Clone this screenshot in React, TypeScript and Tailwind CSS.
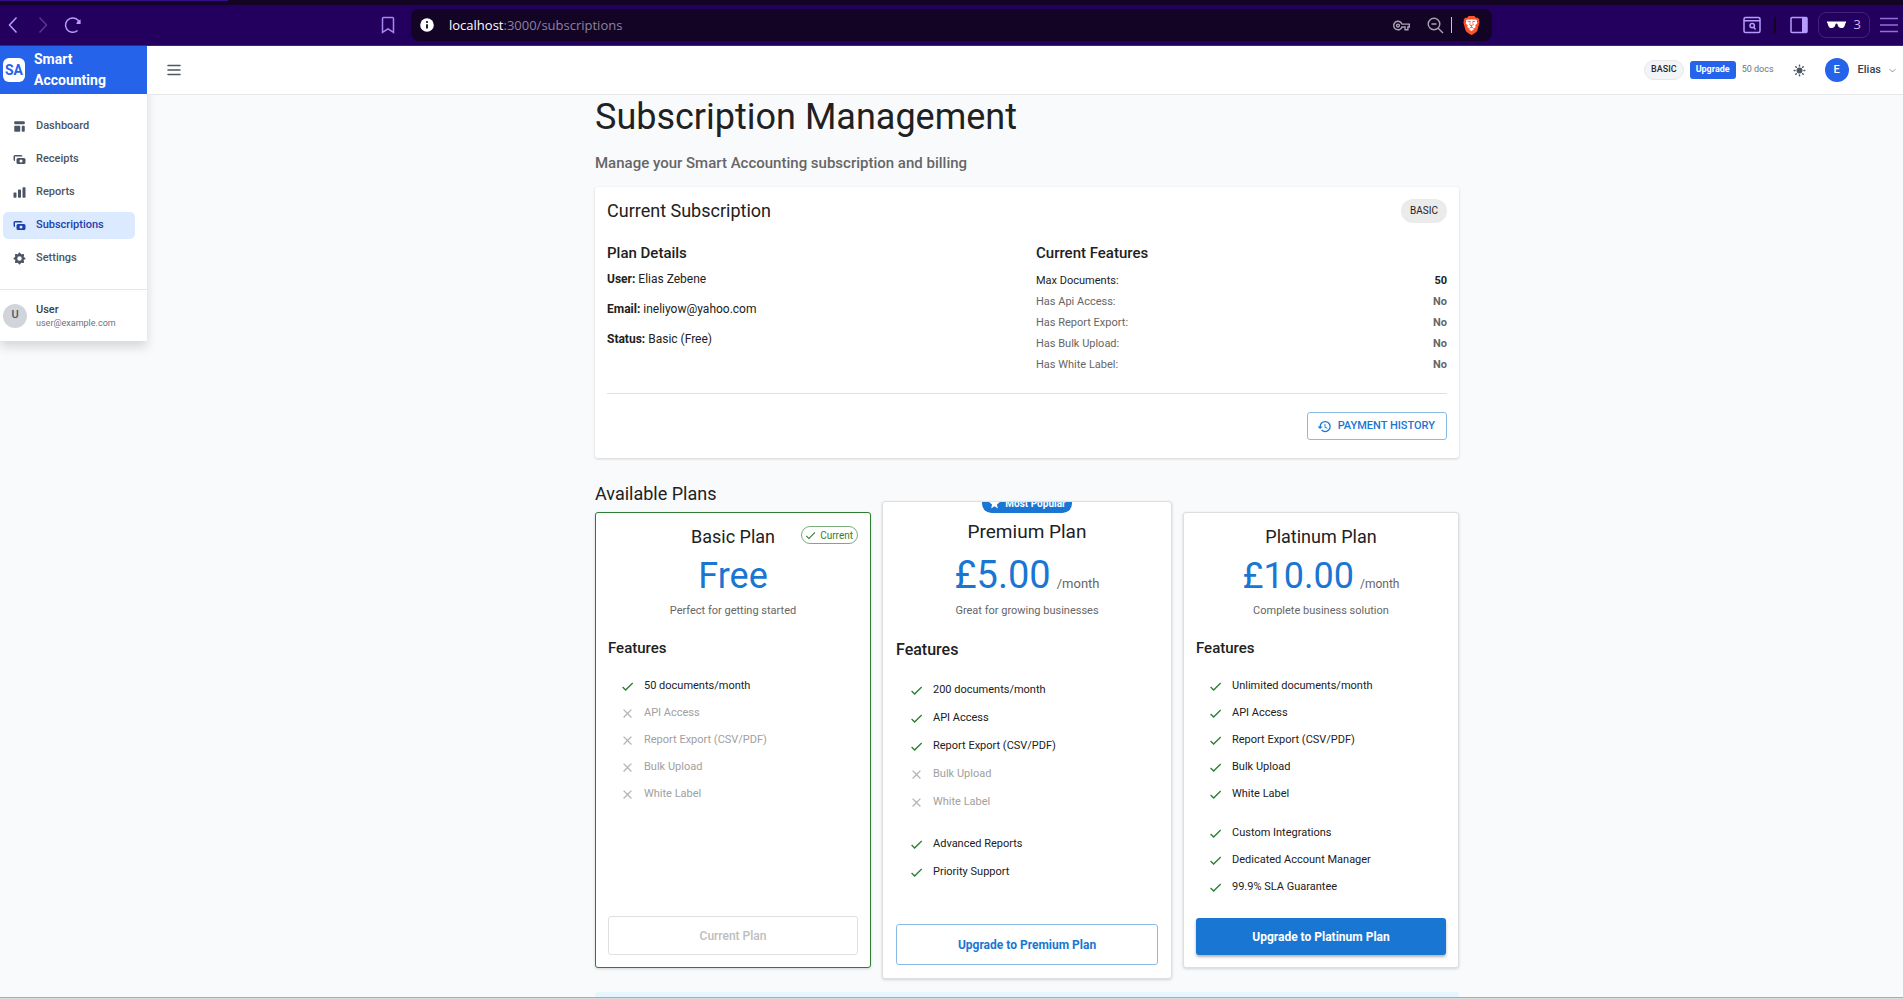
import type { ComponentType, ReactNode } from "react";
import { HiCash, HiChartBar, HiCog, HiOutlineChevronDown, HiOutlineMenu, HiSun, HiTemplate } from "react-icons/hi";
import { MdCheck, MdClose, MdHistory, MdOutlineVpnKey, MdStar } from "react-icons/md";
import { SiBrave } from "react-icons/si";

type Feature = { label: string; included: boolean };

type Plan = {
  name: string;
  price: string;
  period?: string;
  description: string;
  features: Feature[];
  extras: string[];
  action: string;
  kind: "current" | "popular" | "standard";
};

const plans: Plan[] = [
  {
    name: "Basic Plan",
    price: "Free",
    description: "Perfect for getting started",
    features: [
      { label: "50 documents/month", included: true },
      { label: "API Access", included: false },
      { label: "Report Export (CSV/PDF)", included: false },
      { label: "Bulk Upload", included: false },
      { label: "White Label", included: false },
    ],
    extras: [],
    action: "Current Plan",
    kind: "current",
  },
  {
    name: "Premium Plan",
    price: "£5.00",
    period: "/month",
    description: "Great for growing businesses",
    features: [
      { label: "200 documents/month", included: true },
      { label: "API Access", included: true },
      { label: "Report Export (CSV/PDF)", included: true },
      { label: "Bulk Upload", included: false },
      { label: "White Label", included: false },
    ],
    extras: ["Advanced Reports", "Priority Support"],
    action: "Upgrade to Premium Plan",
    kind: "popular",
  },
  {
    name: "Platinum Plan",
    price: "£10.00",
    period: "/month",
    description: "Complete business solution",
    features: [
      { label: "Unlimited documents/month", included: true },
      { label: "API Access", included: true },
      { label: "Report Export (CSV/PDF)", included: true },
      { label: "Bulk Upload", included: true },
      { label: "White Label", included: true },
    ],
    extras: ["Custom Integrations", "Dedicated Account Manager", "99.9% SLA Guarantee"],
    action: "Upgrade to Platinum Plan",
    kind: "standard",
  },
];

const navItems: { label: string; icon: ComponentType<{ className?: string }>; active?: boolean }[] = [
  { label: "Dashboard", icon: HiTemplate },
  { label: "Receipts", icon: HiCash },
  { label: "Reports", icon: HiChartBar },
  { label: "Subscriptions", icon: HiCash, active: true },
  { label: "Settings", icon: HiCog },
];

const currentFeatures = [
  { label: "Max Documents:", value: "50", on: true },
  { label: "Has Api Access:", value: "No", on: false },
  { label: "Has Report Export:", value: "No", on: false },
  { label: "Has Bulk Upload:", value: "No", on: false },
  { label: "Has White Label:", value: "No", on: false },
];

function ChromeButton({ label, className = "", children }: { label: string; className?: string; children: ReactNode }) {
  return (
    <button type="button" aria-label={label} className={`flex shrink-0 items-center justify-center ${className}`}>
      {children}
    </button>
  );
}

function BrowserBar() {
  return (
    <div className="shrink-0">
      <div className="h-[5px] bg-[#130426]">
        <div className="h-px w-[12%] bg-[#3a0a91]" />
      </div>
      <div className="flex h-[41px] items-center border-b border-[#45217f] bg-[#23005e] pr-[5px] pl-2 text-[#a58af0]">
        <ChromeButton label="Back" className="w-[10px]">
          <svg width="10" height="18" viewBox="0 0 10 18" fill="none" stroke="#b79cff" strokeWidth="1.5">
            <path d="M8.5 1.5 1.5 9l7 7.5" />
          </svg>
        </ChromeButton>
        <ChromeButton label="Forward" className="ml-5 w-[10px]">
          <svg width="10" height="18" viewBox="0 0 10 18" fill="none" stroke="#5a3595" strokeWidth="1.5">
            <path d="m1.5 1.5 7 7.5-7 7.5" />
          </svg>
        </ChromeButton>
        <ChromeButton label="Reload" className="ml-4 w-[18px]">
          <svg width="18" height="18" viewBox="0 0 18 18" fill="none" stroke="#b79cff" strokeWidth="1.5">
            <path d="M13.5 14.5A7.2 7.2 0 1 1 15.6 7" />
            <path d="M16.6 3.5V8h-4.2c0-2 2-3.6 4.2-4.5z" fill="#b79cff" stroke="none" />
          </svg>
        </ChromeButton>
        <ChromeButton label="Bookmark" className="ml-[299px] w-[14px]">
          <svg width="14" height="18" viewBox="0 0 14 18" fill="none" stroke="#a58af0" strokeWidth="1.5">
            <path d="M1.5 2.5c0-.6.4-1 1-1h9c.6 0 1 .4 1 1v13.8L7 12.8l-5.5 3.5z" />
          </svg>
        </ChromeButton>
        <div className="ml-4 flex h-8 w-[1081px] items-center rounded-lg bg-[#130426] px-[9px]">
          <svg width="14" height="14" viewBox="0 0 14 14" aria-hidden="true">
            <circle cx="7" cy="7" r="6.8" fill="#fff" />
            <path d="M7 6.2v4.2" stroke="#130426" strokeWidth="1.8" fill="none" />
            <circle cx="7" cy="4" r="1.1" fill="#130426" />
          </svg>
          <p className="ml-[15px] pt-px font-['Open_Sans',sans-serif] text-[13px] text-[#8d829f]">
            <span className="text-white">localhost</span>:3000/subscriptions
          </p>
          <div className="ml-auto flex items-center text-[#a8a3b3]">
            <ChromeButton label="Saved passwords">
              <MdOutlineVpnKey className="size-[17px]" />
            </ChromeButton>
            <ChromeButton label="Zoom out" className="ml-[17px]">
              <svg width="17" height="17" viewBox="0 0 17 17" fill="none" stroke="currentColor" strokeWidth="1.4">
                <circle cx="7" cy="7" r="5.8" />
                <path d="m11.2 11.2 4.8 4.8M4.5 7h5" />
              </svg>
            </ChromeButton>
            <span className="ml-[7px] h-4 w-px bg-[#c8c4d0]" />
            <ChromeButton label="Brave shields" className="relative ml-[10px] size-[19px]">
              <svg viewBox="0 0 18 18" className="absolute inset-0 size-[19px]" aria-hidden="true">
                <path d="M4 3h10l1 4-3 7-3 2-3-2-3-7z" fill="#fff" />
              </svg>
              <SiBrave className="relative size-[19px] text-[#fb542b]" />
            </ChromeButton>
            <span className="w-[2px]" />
          </div>
        </div>
        <div className="ml-auto flex items-center">
          <ChromeButton label="Search tabs">
            <svg width="18" height="18" viewBox="0 0 18 18" fill="none" stroke="#b79cff" strokeWidth="1.5">
              <rect x="1" y="1.5" width="16" height="15" rx="1.5" />
              <path d="M1 4.8h16M10.8 11.3l1.7 2.2" />
              <circle cx="9.2" cy="9.6" r="2.2" />
            </svg>
          </ChromeButton>
          <span className="ml-[13px] h-4 w-[2px] bg-[#130426]" />
          <ChromeButton label="Sidebar" className="ml-[14px]">
            <svg width="18" height="18" viewBox="0 0 18 18" fill="none" stroke="#b79cff" strokeWidth="1.5">
              <rect x="1" y="1.5" width="16" height="15" rx="1" />
              <path d="M12 2h5v14h-5z" fill="#b79cff" stroke="none" />
            </svg>
          </ChromeButton>
          <button
            type="button"
            className="ml-[10px] flex h-[26px] w-[52px] items-center justify-between rounded-lg border border-[#45217f] px-2 font-['Open_Sans',sans-serif] text-[13px] text-[#cbb8ff]"
          >
            <svg width="19" height="8" viewBox="0 0 19 8" fill="#fff" aria-hidden="true">
              <path d="M0 .5h19v1.5c-.5 0-.7.5-.9 1.4C17.6 5.8 16.4 7 14.4 7c-2.2 0-3.5-1.3-4-3.9-.2-.7-1.6-.7-1.8 0C8.1 5.7 6.8 7 4.6 7c-2 0-3.2-1.2-3.7-3.6C.7 2.5.5 2 0 2z" />
            </svg>
            3
          </button>
          <ChromeButton label="Menu" className="ml-[10px]">
            <svg width="18" height="16" viewBox="0 0 18 16" fill="none" stroke="#8f6fe0" strokeWidth="1.5">
              <path d="M0 1.5h18M0 8h18M0 14.5h18" />
            </svg>
          </ChromeButton>
        </div>
      </div>
    </div>
  );
}

function Sidebar() {
  return (
    <aside className="flex w-[147px] shrink-0 flex-col self-start bg-white shadow-[0_6px_10px_rgba(0,0,0,0.14)]">
      <div className="flex h-12 items-center gap-[9px] bg-[#2563eb] pl-[3px] text-white">
        <span className="flex h-6 w-[22px] items-center justify-center rounded-md bg-white text-[14px] font-bold text-[#2563eb]">
          SA
        </span>
        <span className="w-20 text-[14px] leading-[21px] font-bold">Smart Accounting</span>
      </div>
      <nav className="flex flex-col gap-[6px] pt-[19px] pr-3 pb-[17px] pl-[3px]">
        {navItems.map(({ label, icon: Icon, active }) => (
          <a
            key={label}
            href={`#${label.toLowerCase()}`}
            className={
              active
                ? "flex h-[27px] items-center gap-[9px] rounded-[5px] bg-[#dbeafe] pl-[9px] text-[11px] font-medium text-[#1e40af]"
                : "flex h-[27px] items-center gap-[9px] rounded-[5px] pl-[9px] text-[11px] font-medium text-[#4b5563]"
            }
          >
            <Icon className="size-[15px]" />
            {label}
          </a>
        ))}
      </nav>
      <div className="flex items-center gap-[9px] border-t border-[#e5e7eb] py-3 pl-[3px]">
        <span className="flex size-6 items-center justify-center rounded-full bg-[#d1d5db] text-[11px] font-medium text-[#4b5563]">
          U
        </span>
        <span className="flex flex-col">
          <span className="text-[11px] leading-[15px] font-medium text-[#374151]">User</span>
          <span className="text-[9px] leading-3 text-[#6b7280]">user@example.com</span>
        </span>
      </div>
    </aside>
  );
}

function TopBar() {
  return (
    <header className="flex h-[49px] shrink-0 items-center border-b border-[#e5e7eb] bg-white pr-[6px] pl-[18px]">
      <button type="button" aria-label="Toggle menu" className="text-[#4b5563]">
        <HiOutlineMenu className="size-[18px]" />
      </button>
      <div className="ml-auto flex items-center gap-[6px]">
        <span className="flex h-5 items-center rounded-full border border-[#e5e7eb] bg-[#f3f4f6] px-[6px] text-[9px] font-medium text-[#1f2937]">
          BASIC
        </span>
        <button type="button" className="h-[18px] rounded-[3px] bg-[#2563eb] px-[6px] text-[9px] font-bold text-white">
          Upgrade
        </button>
        <span className="text-[9px] text-[#6b7280]">50 docs</span>
      </div>
      <button type="button" aria-label="Toggle theme" className="ml-[18px] text-[#4b5563]">
        <HiSun className="size-[15px]" />
      </button>
      <button type="button" className="ml-[18px] flex items-center text-[11px] font-medium text-[#374151]">
        <span className="flex size-6 items-center justify-center rounded-full bg-[#2563eb] text-white">E</span>
        <span className="ml-[9px]">Elias</span>
        <HiOutlineChevronDown className="ml-[7px] size-[9px] text-[#6b7280]" />
      </button>
    </header>
  );
}

function CurrentSubscription() {
  return (
    <section className="rounded-[3px] bg-white p-3 pb-[18px] shadow-[0_1px_3px_rgba(0,0,0,0.16)]">
      <div className="flex items-center justify-between">
        <h2 className="text-[18px] leading-6">Current Subscription</h2>
        <span className="flex h-6 items-center rounded-full bg-[#ebebeb] px-[9px] pb-[2px] text-[10px]">BASIC</span>
      </div>
      <div className="mt-[18px] grid grid-cols-2 gap-[18px]">
        <div>
          <h3 className="text-[15px] leading-6 font-medium">Plan Details</h3>
          <div className="mt-[5px] flex flex-col gap-3 text-[12px] leading-[18px]">
            <p>
              <strong className="font-bold">User:</strong> Elias Zebene
            </p>
            <p>
              <strong className="font-bold">Email:</strong> ineliyow@yahoo.com
            </p>
            <p>
              <strong className="font-bold">Status:</strong> Basic (Free)
            </p>
          </div>
        </div>
        <div>
          <h3 className="text-[15px] leading-6 font-medium">Current Features</h3>
          <dl className="mt-2 flex flex-col gap-[6px] text-[11px] leading-[15px]">
            {currentFeatures.map((f) => (
              <div key={f.label} className={f.on ? "flex justify-between" : "flex justify-between text-[#666]"}>
                <dt>{f.label}</dt>
                <dd className="font-bold">{f.value}</dd>
              </div>
            ))}
          </dl>
        </div>
      </div>
      <hr className="mt-[21px] border-[#e0e0e0]" />
      <div className="mt-[18px] flex justify-end">
        <button
          type="button"
          className="flex h-7 items-center gap-[6px] rounded-[3px] border border-[#8cbae8] pr-[11px] pl-[9px] text-[11px] font-medium text-[#1976d2]"
        >
          <MdHistory className="size-[15px]" />
          PAYMENT HISTORY
        </button>
      </div>
    </section>
  );
}

function FeatureRow({ feature, large }: { feature: Feature; large: boolean }) {
  return (
    <li
      className={`flex items-center gap-[9px] text-[11px] ${large ? "h-7" : "h-[27px]"} ${
        feature.included ? "" : "text-[#a0a0a0]"
      }`}
    >
      {feature.included ? (
        <MdCheck className="size-[15px] text-[#2e7d32]" />
      ) : (
        <MdClose className="size-[15px] text-[#b5b5b5]" />
      )}
      {feature.label}
    </li>
  );
}

function PlanCard({ plan }: { plan: Plan }) {
  const large = plan.kind === "popular";
  const card = {
    current: "border-[#2e7d32] p-3",
    popular: "-mx-[7px] -my-[11px] overflow-hidden border-[#dedede] px-[13px] pt-[18px] pb-[13px]",
    standard: "border-[#dedede] p-3",
  }[plan.kind];
  const button = {
    current: "h-[39px] border border-[#e0e0e0] text-[12px] font-medium text-[#bdbdbd]",
    popular: "h-[41px] border border-[#8cbae8] text-[12px] font-bold text-[#1976d2]",
    standard: "h-[37px] bg-[#1976d2] text-[12px] font-bold text-white shadow-[0_2px_3px_rgba(0,0,0,0.3)]",
  }[plan.kind];

  return (
    <article
      className={`relative flex flex-col rounded-[3px] border bg-white shadow-[0_1px_3px_rgba(0,0,0,0.16)] ${card}`}
    >
      {plan.kind === "popular" && (
        <span className="absolute -top-2 left-1/2 flex h-[19px] w-[90px] -translate-x-1/2 items-center justify-center gap-1 rounded-full bg-[#1976d2] text-[10px] font-bold whitespace-nowrap text-white">
          <MdStar className="size-[13px]" />
          Most Popular
        </span>
      )}
      {plan.kind === "current" && (
        <span className="absolute top-[13px] right-3 flex h-[18px] items-center gap-[3px] rounded-full border border-[#79ad7c] px-1 pl-[2px] text-[10px] text-[#2e7d32]">
          <MdCheck className="size-[13px]" />
          Current
        </span>
      )}
      <h3 className={large ? "text-center text-[19px] leading-6" : "text-center text-[18px] leading-6"}>{plan.name}</h3>
      <p
        className={
          large
            ? "mt-[9px] flex items-baseline justify-center gap-[6px] text-[38px] leading-[44px] text-[#1976d2]"
            : "mt-[6px] flex items-baseline justify-center gap-[6px] text-[36px] leading-[42px] text-[#1976d2]"
        }
      >
        {plan.price}
        {plan.period && (
          <span className={large ? "text-[13px] leading-4 text-[#666]" : "text-[12px] leading-4 text-[#666]"}>
            {plan.period}
          </span>
        )}
      </p>
      <p className="mt-[6px] text-center text-[11px] leading-4 text-[#666]">{plan.description}</p>
      <h4
        className={
          large ? "mt-[19px] text-[16px] leading-6 font-medium" : "mt-[17px] text-[15px] leading-6 font-medium"
        }
      >
        Features
      </h4>
      <ul className={large ? "mt-[14px] pl-[13px]" : "mt-[13px] pl-3"}>
        {plan.features.map((f) => (
          <FeatureRow key={f.label} feature={f} large={large} />
        ))}
      </ul>
      {plan.extras.length > 0 && (
        <ul className={large ? "mt-[14px] pl-[13px]" : "mt-3 pl-3"}>
          {plan.extras.map((label) => (
            <FeatureRow key={label} feature={{ label, included: true }} large={large} />
          ))}
        </ul>
      )}
      <div className="mt-auto pt-[17px]">
        <button type="button" disabled={plan.kind === "current"} className={`w-full rounded-[3px] ${button}`}>
          {plan.action}
        </button>
      </div>
    </article>
  );
}

export default function App() {
  return (
    <div className="flex h-screen flex-col overflow-hidden bg-[#f9fafc] font-[Roboto,sans-serif] text-[#212121]">
      <BrowserBar />
      <div className="flex min-h-0 flex-1">
        <Sidebar />
        <div className="flex min-w-0 flex-1 flex-col">
          <TopBar />
          <main className="min-h-0 flex-1 overflow-hidden pl-1">
            <div className="mx-auto max-w-[864px]">
              <h1 className="text-[36px] leading-[44px]">Subscription Management</h1>
              <p className="my-3 text-[15px] leading-6 font-medium text-[#666]">
                Manage your Smart Accounting subscription and billing
              </p>
              <CurrentSubscription />
              <h2 className="mt-6 mb-[6px] text-[18px] leading-6">Available Plans</h2>
              <div className="grid grid-cols-3 gap-[18px]">
                {plans.map((plan) => (
                  <PlanCard key={plan.name} plan={plan} />
                ))}
              </div>
              <div className="mt-6 h-12 rounded-[3px] bg-[#e5f6fd]" />
            </div>
          </main>
        </div>
      </div>
      <div className="h-[2px] shrink-0 border-t border-[#a9adb0] bg-[#d9dbdc]" />
    </div>
  );
}
